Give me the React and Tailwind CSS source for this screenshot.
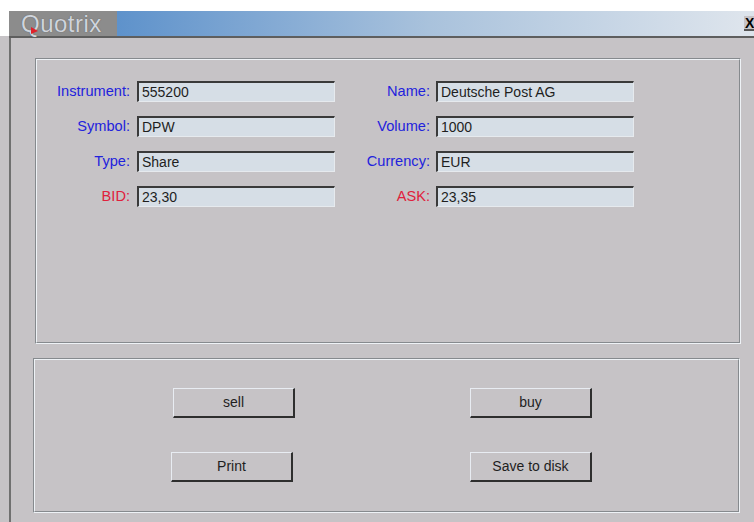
import React from "react";

const rows = [
  { l: "Instrument:", v: "555200", r: "Name:", rv: "Deutsche Post AG", red: false },
  { l: "Symbol:", v: "DPW", r: "Volume:", rv: "1000", red: false },
  { l: "Type:", v: "Share", r: "Currency:", rv: "EUR", red: false },
  { l: "BID:", v: "23,30", r: "ASK:", rv: "23,35", red: true },
];

function Field({ children }) {
  return (
    <div className="w-[198px] h-[21px] bg-[#d6dee6] border-t-2 border-l-2 border-b border-r border-t-[#3a3a3a] border-l-[#3a3a3a] border-b-[#e6eaee] border-r-[#e6eaee] pl-[3px] flex items-center text-[14px] leading-none text-[#1e1e1e]">
      {children}
    </div>
  );
}

function Btn({ children, className = "" }) {
  return (
    <button className={`w-[122px] h-[30px] bg-[#c6c3c6] border-t border-l border-b-2 border-r-2 border-t-[#e8ecf2] border-l-[#e8ecf2] border-b-[#2e2e2e] border-r-[#2e2e2e] text-[14px] text-[#1e1e1e] flex items-center justify-center ${className}`}>
      {children}
    </button>
  );
}

export default function App() {
  return (
    <div className="w-[754px] h-[522px] overflow-hidden bg-[#c6c3c6] flex flex-col font-['Liberation_Sans',Arial,sans-serif]">
      <div className="h-[11px] bg-white shrink-0" />
      {/* title bar */}
      <div className="flex h-[25px] shrink-0 bg-white">
        <div className="w-[9px]" />
        <div className="relative w-[108px] bg-[#8c8c8c] flex items-center pl-[12px]">
          <span className="text-[24px] leading-none text-[#cfd4dc] tracking-[0.5px] [text-shadow:0_0_1px_#555]">Quotrix</span>
          <svg className="absolute left-[22px] top-[16px]" width="8" height="8" viewBox="0 0 8 8">
            <polygon points="0,0 7,4 0,7" fill="#e0202a" />
          </svg>
        </div>
        <div className="flex-1 bg-gradient-to-r from-[#5e92cb] via-[#a9c2dc] to-[#dde4ec]" />
        <div className="w-[12px] bg-[#dde4ec] flex items-center justify-end">
          <div className="w-[10px] h-[15px] bg-[#c6c3c6] border-b-2 border-[#555] text-[14px] leading-none font-bold text-black overflow-hidden pl-[1px]">X</div>
        </div>
      </div>
      <div className="h-[2px] shrink-0 flex">
        <div className="w-[9px] bg-[#c6c3c6]" />
        <div className="flex-1 bg-[#5e5e5e]" />
      </div>
      {/* window body */}
      <div className="flex-1 flex">
        <div className="w-[9px]" />
        <div className="flex-1 border-l-2 border-[#707070] flex flex-col pt-[20px]">
          {/* info panel */}
          <div className="ml-[24px] w-[706px] h-[286px] border border-[#868a8e] border-r-[#eef2f6] border-b-[#eef2f6]">
            <div className="w-full h-full border border-[#eef2f6] border-r-[#868a8e] border-b-[#868a8e] pt-[21px] flex flex-col gap-[14px]">
              {rows.map((r) => (
                <div key={r.l} className="flex items-center h-[21px]">
                  <div className={`w-[93px] text-right text-[14.6px] ${r.red ? "text-[#e0203c]" : "text-[#2222dd]"}`}>{r.l}</div>
                  <div className="w-[7px]" />
                  <Field>{r.v}</Field>
                  <div className={`w-[95px] text-right text-[14.6px] ${r.red ? "text-[#e0203c]" : "text-[#2222dd]"}`}>{r.r}</div>
                  <div className="w-[6px]" />
                  <Field>{r.rv}</Field>
                </div>
              ))}
            </div>
          </div>
          {/* action panel */}
          <div className="mt-[14px] ml-[22px] w-[707px] h-[155px] border border-[#868a8e] border-r-[#eef2f6] border-b-[#eef2f6]">
            <div className="w-full h-full border border-[#eef2f6] border-r-[#868a8e] border-b-[#868a8e] pt-[28px] flex flex-col gap-[34px]">
              <div className="flex">
                <Btn className="ml-[138px]">sell</Btn>
                <Btn className="ml-[175px]">buy</Btn>
              </div>
              <div className="flex">
                <Btn className="ml-[136px]">Print</Btn>
                <Btn className="ml-[177px]">Save to disk</Btn>
              </div>
            </div>
          </div>
        </div>
      </div>
    </div>
  );
}
